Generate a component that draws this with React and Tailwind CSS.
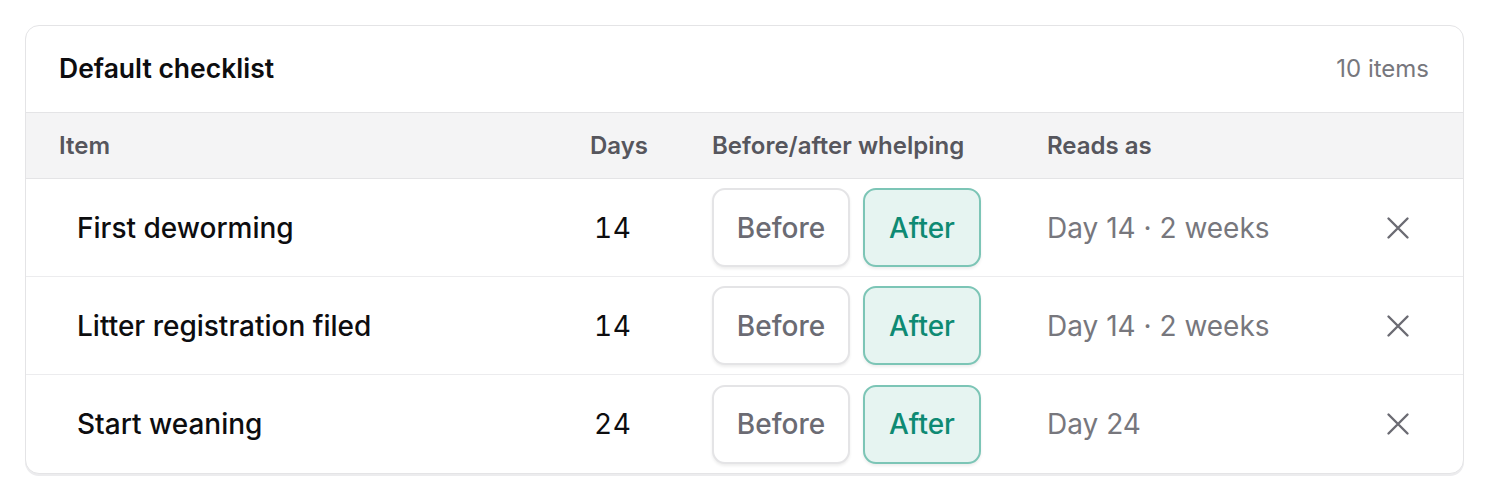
import React from 'react'

const rows = [
  { name: 'First deworming', days: 14, reads: 'Day 14 · 2 weeks' },
  { name: 'Litter registration filed', days: 14, reads: 'Day 14 · 2 weeks' },
  { name: 'Start weaning', days: 24, reads: 'Day 24' },
]

const cols = 'grid grid-cols-[531px_122px_335px_1fr_56px] items-center pl-[33px] pr-[37px]'

const XIcon = () => (
  <svg width="24" height="24" viewBox="0 0 24 24" fill="none" stroke="currentColor" strokeWidth="2.4" strokeLinecap="round">
    <path d="M2.5 2.5 21.5 21.5M21.5 2.5 2.5 21.5" />
  </svg>
)

export default function App() {
  return (
    <div className="bg-white pl-[25px] pr-[24px] pt-[25px] pb-6 font-['Inter',sans-serif]">
      <div className="overflow-hidden rounded-[14px] border border-[#e4e4e6] bg-white shadow-[0_2px_0_#ececee]">
        {/* Card header */}
        <div className="flex h-[87px] items-center justify-between border-b border-[#e4e4e6] pl-[33px] pr-[34px]">
          <h2 className="text-[26.5px] font-semibold text-[#0d0d0f]">Default checklist</h2>
          <span className="text-[24px] text-[#77777d]">10 items</span>
        </div>

        {/* Column headings */}
        <div className={`${cols} h-[66px] border-b border-[#e4e4e6] bg-[#f4f4f5] text-[24px] font-semibold text-[#56565d]`}>
          <div>Item</div>
          <div>Days</div>
          <div>Before/after whelping</div>
          <div>Reads as</div>
          <div />
        </div>

        {/* Rows */}
        {rows.map((r, i) => (
          <div
            key={r.name}
            className={`${cols} h-[98px] ${i < rows.length - 1 ? 'border-b border-[#ececee]' : ''}`}
          >
            <div className="pl-[18px] text-[28px] font-[470] text-[#0d0d0f]">{r.name}</div>
            <div className="pl-[4px] text-[28px] tracking-[0.5px] tabular-nums text-[#0d0d0f]">{r.days}</div>
            <div className="flex gap-[13px]">
              <button className="h-[79px] w-[138px] rounded-[13px] border-2 border-[#e4e4e6] bg-white text-[28px] font-medium text-[#6b6b73] shadow-[0_2px_3px_rgba(0,0,0,0.07)]">
                Before
              </button>
              <button className="h-[79px] w-[118px] rounded-[13px] border-2 border-[#7cc5b6] bg-[#e6f4f1] text-[28px] font-medium text-[#0e8a73] shadow-[0_2px_3px_rgba(0,0,0,0.07)]">
                After
              </button>
            </div>
            <div className="text-[28px] text-[#77777d]">{r.reads}</div>
            <div className="flex justify-center text-[#6b6b73]">
              <XIcon />
            </div>
          </div>
        ))}
      </div>
    </div>
  )
}
